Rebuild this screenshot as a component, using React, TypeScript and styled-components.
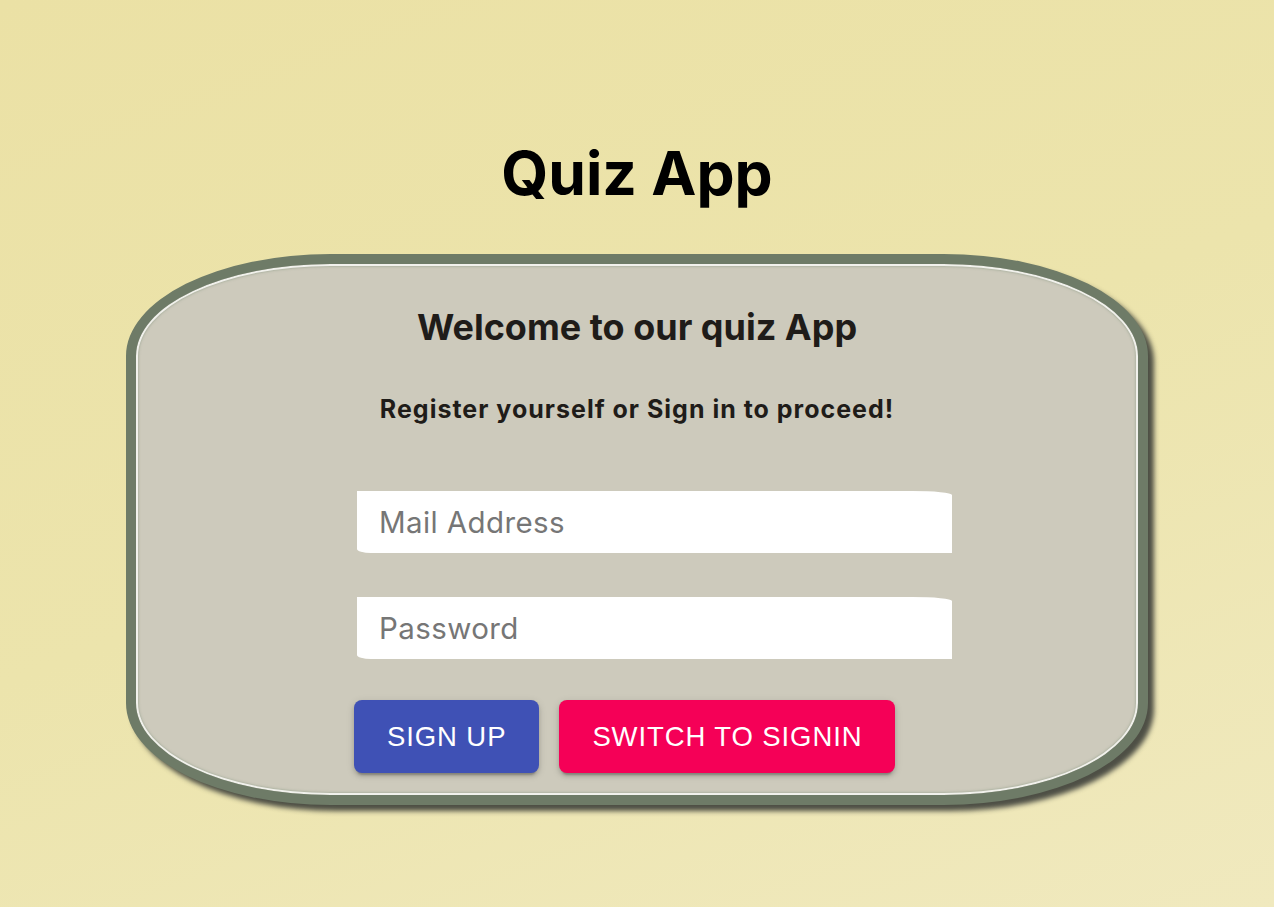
import React from "react";
import styled, { createGlobalStyle } from "styled-components";

const GlobalStyle = createGlobalStyle`
  html, body { margin: 0; padding: 0; }
  body { font-family: Inter, "Noto Sans", sans-serif; }
  * { box-sizing: border-box; }
`;

const Page = styled.div`
  min-height: 907px;
  background: linear-gradient(160deg, #ebe1a5 0%, #ece4ac 50%, #f0e9be 100%);
  display: flex;
  flex-direction: column;
  align-items: center;
  padding-top: 137px;
`;

const Title = styled.h1`
  margin: 0;
  font-family: Inter, sans-serif;
  font-weight: 700;
  font-size: 60.5px;
  line-height: 72px;
  color: #000;
`;

const Card = styled.div`
  margin-top: 45px;
  width: 1022px;
  height: 551px;
  background: #cdcabc;
  border: 10px solid #6e7b67;
  border-radius: 20% / 18.5%;
  box-shadow: inset 0 0 0 2px #f1f1ec, inset 0 0 2px 3px rgba(150, 162, 142, 0.5),
    6px 6px 5px rgba(60, 62, 56, 0.9);
  display: flex;
  flex-direction: column;
  align-items: center;
  padding-top: 41px;
`;

const Welcome = styled.h2`
  margin: 0;
  font-family: Inter, sans-serif;
  font-weight: 700;
  font-size: 36px;
  line-height: 44px;
  color: #1f1c19;
`;

const Subtitle = styled.h3`
  margin: 45px 0 0;
  font-family: Inter, sans-serif;
  font-weight: 700;
  font-size: 25px;
  line-height: 30px;
  letter-spacing: 1px;
  color: #1f1c19;
`;

const Form = styled.form`
  margin: 67px 0 0 32px;
  width: 598px;
  display: flex;
  flex-direction: column;
`;

const Input = styled.input<{ $gap?: number }>`
  margin: ${(p) => p.$gap ?? 0}px 0 0 3px;
  width: 595px;
  height: 62px;
  border: none;
  outline: none;
  background: #fff;
  border-top-right-radius: 40px 4px;
  border-bottom-left-radius: 14px 4px;
  padding: 0 22px;
  font-family: Inter, sans-serif;
  font-size: 29.5px;
  letter-spacing: 0.4px;
  color: #222;
  &::placeholder { color: #767676; }
`;

const Buttons = styled.div`
  margin-top: 41px;
  display: flex;
  gap: 20px;
`;

const Button = styled.button<{ $color: string }>`
  height: 73px;
  padding: 0 33px;
  border: none;
  border-radius: 8px;
  background: ${(p) => p.$color};
  color: #fff;
  font-family: "Liberation Sans", Arial, sans-serif;
  font-size: 27.5px;
  letter-spacing: 0.9px;
  text-transform: uppercase;
  box-shadow: 0 5px 2px -3px rgba(0,0,0,0.2), 0 3px 4px 0 rgba(0,0,0,0.14), 0 2px 9px 0 rgba(0,0,0,0.12);
  cursor: pointer;
`;

export default function App() {
  return (
    <Page>
      <GlobalStyle />
      <Title>Quiz App</Title>
      <Card>
        <Welcome>Welcome to our quiz App</Welcome>
        <Subtitle>Register yourself or Sign in to proceed!</Subtitle>
        <Form onSubmit={(e) => e.preventDefault()}>
          <Input type="email" placeholder="Mail Address" />
          <Input type="password" placeholder="Password" $gap={44} />
          <Buttons>
            <Button type="button" $color="#3f51b5">Sign Up</Button>
            <Button type="button" $color="#f50057">Switch to Signin</Button>
          </Buttons>
        </Form>
      </Card>
    </Page>
  );
}
